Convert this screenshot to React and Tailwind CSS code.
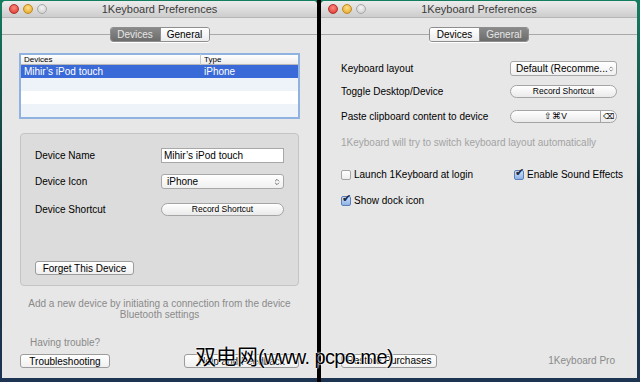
import { ChevronsUpDown } from 'lucide-react'

const FONT = { fontFamily: '"Lucida Grande", "Liberation Sans", Arial, sans-serif' }

const Lights = () => (
  <div className="flex items-center gap-[4px] pl-[7px]">
    <span className="w-[10px] h-[10px] rounded-full bg-[radial-gradient(circle_at_50%_35%,#ff8a80,#d9302a)] border border-[#b0302a]" />
    <span className="w-[10px] h-[10px] rounded-full bg-[radial-gradient(circle_at_50%_35%,#ffe08a,#e0a020)] border border-[#c08a1e]" />
    <span className="w-[10px] h-[10px] rounded-full bg-[radial-gradient(circle_at_50%_35%,#f4f4f4,#c8c8c8)] border border-[#a8a8a8]" />
  </div>
)

const TitleBar = () => (
  <div className="relative h-[17px] flex items-center bg-gradient-to-b from-[#ececec] to-[#cdcdcd] border-b border-[#b6b6b6]">
    <Lights />
    <span className="absolute inset-x-0 text-center text-[11px] text-[#3c3c3c]">1Keyboard Preferences</span>
  </div>
)

const Tabs = ({ active }) => (
  <div className="flex items-center mt-[9px] h-[14px]">
    <div className="flex-1 h-px bg-[#a9a9a9]" />
    <div className="flex rounded-[3px] border border-[#8e8e8e] overflow-hidden shadow-[0_1px_0_#fff]">
      {['Devices', 'General'].map((t, i) => (
        <span
          key={t}
          className={`w-[49px] h-[13px] flex items-center justify-center text-[10px] ${i === 1 ? 'border-l border-[#8e8e8e]' : ''} ${
            active === t ? 'bg-gradient-to-b from-[#8a8a8a] to-[#6c6c6c] text-[#e6e6e6]' : 'bg-gradient-to-b from-white to-[#ececec] text-black'
          }`}
        >
          {t}
        </span>
      ))}
    </div>
    <div className="flex-1 h-px bg-[#a9a9a9]" />
  </div>
)

const Btn = ({ children, className = '' }) => (
  <div className={`h-[14px] flex items-center justify-center whitespace-nowrap bg-gradient-to-b from-white to-[#f0f0f0] border border-[#9c9c9c] rounded-[3px] text-[10px] text-black ${className}`}>
    {children}
  </div>
)

const Pill = ({ children, className = '' }) => (
  <div className={`h-[13px] flex items-center justify-center whitespace-nowrap bg-gradient-to-b from-white to-[#eaeaea] border border-[#a4a4a4] rounded-full text-[8.5px] text-black ${className}`}>
    {children}
  </div>
)

const Check = ({ on }) => (
  <span
    className={`relative shrink-0 w-[10px] h-[10px] rounded-[2px] border ${
      on ? 'border-[#5a7fb8] bg-gradient-to-b from-[#cfe0f8] to-[#8db2e6]' : 'border-[#a4a4a4] bg-gradient-to-b from-white to-[#ededed]'
    }`}
  >
    {on && <span className="absolute -top-[4px] left-[0px] text-[11px] leading-none text-[#1a2a40]">✔</span>}
  </span>
)

export default function App() {
  return (
    <div style={FONT} className="relative w-[640px] h-[382px] overflow-hidden bg-gradient-to-b from-[#137e5f] via-[#14303a] to-[#1d3452] flex pt-[1px] pb-[4px] px-[2px] gap-[4px]">
      <div className="absolute left-[317px] top-0 bottom-0 w-[4px] bg-black" />

      {/* left window */}
      <div className="relative w-[315px] flex flex-col bg-[#e7e7e7] rounded-t-[4px] overflow-hidden">
        <TitleBar />
        <Tabs active="Devices" />

        <div className="mx-[17px] mt-[12px] h-[66px] border-[2px] border-[#90b2e0] bg-white flex flex-col text-[10px]">
          <div className="h-[10px] flex items-center bg-gradient-to-b from-white to-[#ececec] border-b border-[#b8b8b8] text-[8px] text-black">
            <span className="w-[180px] pl-[3px] border-r border-[#c8c8c8]">Devices</span>
            <span className="pl-[3px]">Type</span>
          </div>
          <div className="h-[13px] flex items-center bg-[#3a6ad8] text-white">
            <span className="w-[180px] pl-[3px]">Mihir’s iPod touch</span>
            <span className="pl-[3px]">iPhone</span>
          </div>
          <div className="h-[13px] bg-[#eef2f9]" />
          <div className="h-[13px] bg-white" />
          <div className="flex-1 bg-[#eef2f9]" />
        </div>

        <div className="mx-[18px] mt-[14px] h-[153px] bg-[#dcdcdc] border border-[#c4c4c4] rounded-[4px] flex flex-col px-[14px] text-[10px] text-black">
          <div className="mt-[14px] flex items-center justify-between">
            <span>Device Name</span>
            <div className="w-[123px] h-[15px] bg-white border border-[#a8a8a8] flex items-center pl-[2px]">Mihir’s iPod touch</div>
          </div>
          <div className="mt-[11px] flex items-center justify-between">
            <span>Device Icon</span>
            <div className="w-[123px] h-[15px] rounded-[3px] bg-gradient-to-b from-white to-[#f0f0f0] border border-[#a8a8a8] flex items-center justify-between pl-[5px] pr-[2px]">
              <span>iPhone</span>
              <ChevronsUpDown size={8} strokeWidth={2.5} className="text-[#555]" />
            </div>
          </div>
          <div className="mt-[13px] flex items-center justify-between">
            <span>Device Shortcut</span>
            <Pill className="w-[123px]">Record Shortcut</Pill>
          </div>
          <div className="mt-auto mb-[10px]">
            <Btn className="w-[99px]">Forget This Device</Btn>
          </div>
        </div>

        <div className="mt-[12px] text-center text-[10px] leading-[11px] text-[#8a8a8a]">
          <div>Add a new device by initiating a connection from the device</div>
          <div>Bluetooth settings</div>
        </div>

        <div className="mt-auto px-[18px] pb-[10px] text-[10px]">
          <div className="pl-[10px] mb-[4px] text-[#8a8a8a]">Having trouble?</div>
          <div className="flex justify-between">
            <Btn className="w-[90px]">Troubleshooting</Btn>
            <Btn className="w-[115px]">Help and Feedback</Btn>
          </div>
        </div>
      </div>

      {/* right window */}
      <div className="relative w-[316px] flex flex-col bg-[#e7e7e7] rounded-t-[4px] overflow-hidden text-[10px] text-black">
        <TitleBar />
        <Tabs active="General" />

        <div className="px-[20px] mt-[20px] flex flex-col">
          <div className="flex items-center justify-between">
            <span>Keyboard layout</span>
            <div className="w-[107px] shrink-0 h-[15px] rounded-[3px] bg-gradient-to-b from-white to-[#f0f0f0] border border-[#a8a8a8] flex items-center justify-between pl-[5px] pr-[2px] whitespace-nowrap">
              <span>Default (Recomme...</span>
              <ChevronsUpDown size={8} strokeWidth={2.5} className="text-[#555]" />
            </div>
          </div>
          <div className="mt-[8px] flex items-center justify-between">
            <span>Toggle Desktop/Device</span>
            <Pill className="w-[107px]">Record Shortcut</Pill>
          </div>
          <div className="mt-[10px] flex items-center justify-between">
            <span className="whitespace-nowrap">Paste clipboard content to device</span>
            <div className="w-[107px] shrink-0 h-[13px] flex items-center bg-gradient-to-b from-white to-[#eaeaea] border border-[#a4a4a4] rounded-full text-[8.5px]">
              <span className="flex-1 text-center">⇧⌘V</span>
              <span className="w-[16px] h-full border-l border-[#a4a4a4] flex items-center justify-center text-[8px]">⌫</span>
            </div>
          </div>
          <div className="mt-[11px] whitespace-nowrap text-[#a3a3a3]">1Keyboard will try to switch keyboard layout automatically</div>

          <div className="mt-[17px] flex items-center whitespace-nowrap">
            <div className="w-[173px] shrink-0 flex items-center gap-[3px]">
              <Check />
              <span>Launch 1Keyboard at login</span>
            </div>
            <div className="flex items-center gap-[3px]">
              <Check on />
              <span>Enable Sound Effects</span>
            </div>
          </div>
          <div className="mt-[11px] flex items-center gap-[3px]">
            <Check on />
            <span>Show dock icon</span>
          </div>
        </div>

        <div className="mt-auto px-[20px] pb-[10px] flex items-center justify-between">
          <Btn className="w-[96px]">Restore Purchases</Btn>
          <span className="text-[#8a8a8a] pr-[2px]">1Keyboard Pro</span>
        </div>
      </div>

      <div
        className="absolute left-[195px] top-[345px] flex items-baseline text-[21px] leading-none text-black whitespace-nowrap"
        style={{ textShadow: '0 0 2px #fff, 0 0 2px #fff, 0 0 1px #fff' }}
      >
        <span style={{ fontFamily: '"Noto Sans CJK SC", sans-serif' }}>双电网</span>
        <span className="text-[20px] tracking-[-0.6px]" style={{ fontFamily: '"Liberation Sans", Arial, sans-serif' }}>(www. pcpo.me)</span>
      </div>
    </div>
  )
}
